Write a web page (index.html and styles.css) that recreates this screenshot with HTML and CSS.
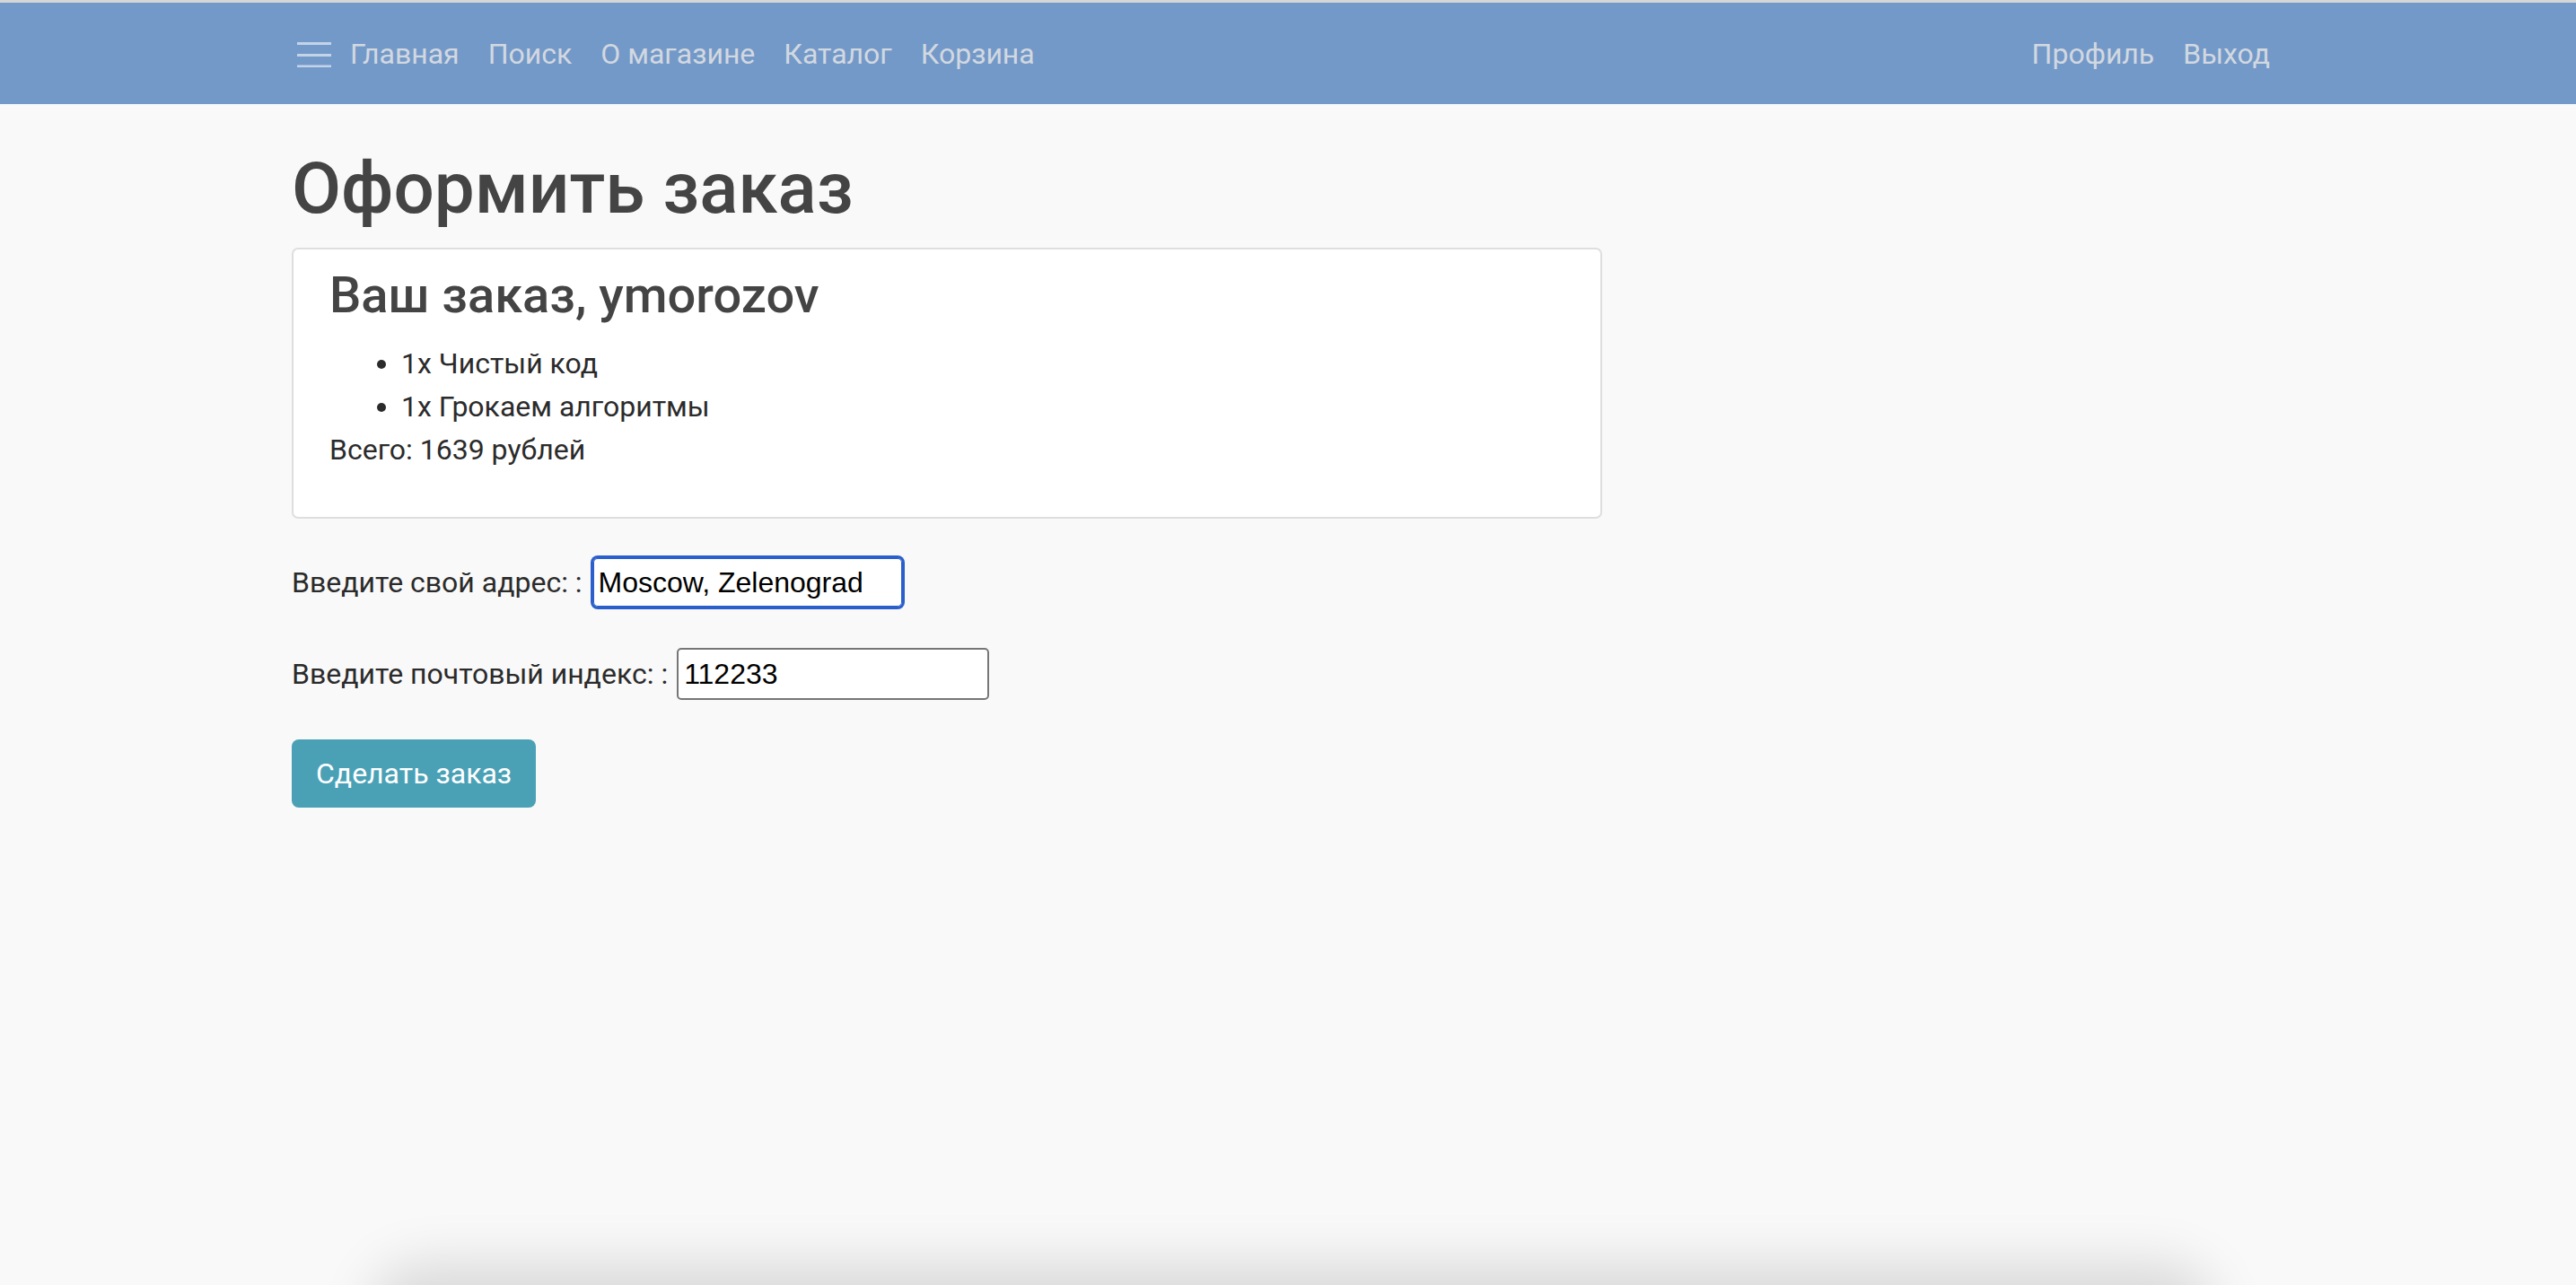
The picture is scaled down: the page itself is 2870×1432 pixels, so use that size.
FILE: index.html
```html
<!DOCTYPE html>
<html lang="ru">
<head>
<meta charset="utf-8">
<title>Оформить заказ</title>
<link rel="stylesheet" href="styles.css">
</head>
<body>
<div class="topline"></div>
<nav class="navbar">
  <div class="container nav-inner">
    <div class="nav-left">
      <span class="toggler">
        <svg width="38" height="30" viewBox="0 0 38 30" aria-hidden="true">
          <path d="M0 3.5h38M0 16.5h38M0 29h38" stroke="#c3d3e8" stroke-width="3" fill="none"/>
        </svg>
      </span>
      <a class="nav-link" href="#">Главная</a>
      <a class="nav-link" href="#">Поиск</a>
      <a class="nav-link" href="#">О магазине</a>
      <a class="nav-link" href="#">Каталог</a>
      <a class="nav-link" href="#">Корзина</a>
    </div>
    <div class="nav-right">
      <a class="nav-link" href="#">Профиль</a>
      <a class="nav-link" href="#">Выход</a>
    </div>
  </div>
</nav>
<main class="container main">
  <h1 class="title">Оформить заказ</h1>
  <div class="card">
    <h3 class="card-title">Ваш заказ, ymorozov</h3>
    <ul class="items">
      <li>1x Чистый код</li>
      <li>1x Грокаем алгоритмы</li>
    </ul>
    <p class="total">Всего: 1639 рублей</p>
  </div>
  <form class="order-form">
    <div class="field">
      <label for="addr">Введите свой адрес: :</label>
      <input id="addr" class="input input-focus" type="text" value="Moscow, Zelenograd">
    </div>
    <div class="field">
      <label for="zip">Введите почтовый индекс: :</label>
      <input id="zip" class="input" type="text" value="112233">
    </div>
    <div class="actions">
      <button type="button" class="btn">Сделать заказ</button>
    </div>
  </form>
</main>
<div class="bottom-shadow"></div>
</body>
</html>
```
FILE: styles.css
```css
html, body {
  margin: 0;
  padding: 0;
}
body {
  background: #f9f9f9;
  font-family: Roboto, "Noto Sans", sans-serif;
  font-size: 32px;
  line-height: 48px;
  color: #2b2b2b;
  min-height: 1432px;
  overflow: hidden;
}
.topline {
  height: 3px;
  background: #d6d6d6;
}
.navbar {
  height: 113px;
  background: #7399c9;
  display: flex;
  align-items: center;
}
.container {
  width: 2220px;
  margin: 0 auto;
}
.nav-inner {
  display: flex;
  justify-content: space-between;
  align-items: center;
}
.nav-left, .nav-right {
  display: flex;
  align-items: center;
}
.toggler {
  display: flex;
  align-items: center;
  margin-left: 6px;
  margin-right: 5px;
}
.toggler svg {
  display: block;
}
.nav-link {
  color: #d2d8e0;
  text-decoration: none;
  padding: 0 16px;
  line-height: 48px;
}
.main {
  padding-top: 46px;
}
.title {
  margin: 0 0 18px;
  font-size: 80px;
  line-height: 1.2;
  font-weight: 500;
  color: #444444;
}
.card {
  box-sizing: border-box;
  width: 1460px;
  background: #ffffff;
  border: 2px solid #dedede;
  border-radius: 7px;
  padding: 18px 40px 19px 40px;
  margin-bottom: 42px;
}
.card-title {
  margin: 0 0 18px;
  font-size: 56px;
  line-height: 1.2;
  font-weight: 500;
  color: #444444;
}
.items {
  margin: 0;
  padding-left: 80px;
}
.total {
  margin: 0 0 32px;
}
.order-form {
  display: flex;
  flex-direction: column;
  gap: 44px;
}
.field {
  display: flex;
  align-items: center;
  gap: 10px;
}
.input {
  box-sizing: border-box;
  width: 348px;
  height: 58px;
  border: 2px solid #767676;
  border-radius: 5px;
  padding: 0 6px;
  background: #ffffff;
  font-family: "Liberation Sans", Arial, sans-serif;
  font-size: 32px;
  color: #000000;
  outline: none;
}
.input-focus {
  border-color: #2b5fcb;
  box-shadow: 0 0 0 1px #2b5fcb, inset 0 0 0 1px #2b5fcb;
  border-radius: 7px;
}
.actions {
  display: flex;
}
.btn {
  height: 76px;
  padding: 0 27px;
  border: none;
  border-radius: 8px;
  background: #4aa1b6;
  color: #ffffff;
  font-family: Roboto, "Noto Sans", sans-serif;
  font-size: 32px;
  cursor: pointer;
}
.bottom-shadow {
  position: fixed;
  left: 430px;
  right: 420px;
  top: 1432px;
  height: 80px;
  border-radius: 40px;
  box-shadow: 0 -6px 60px 18px rgba(0, 0, 0, 0.13);
}
```
